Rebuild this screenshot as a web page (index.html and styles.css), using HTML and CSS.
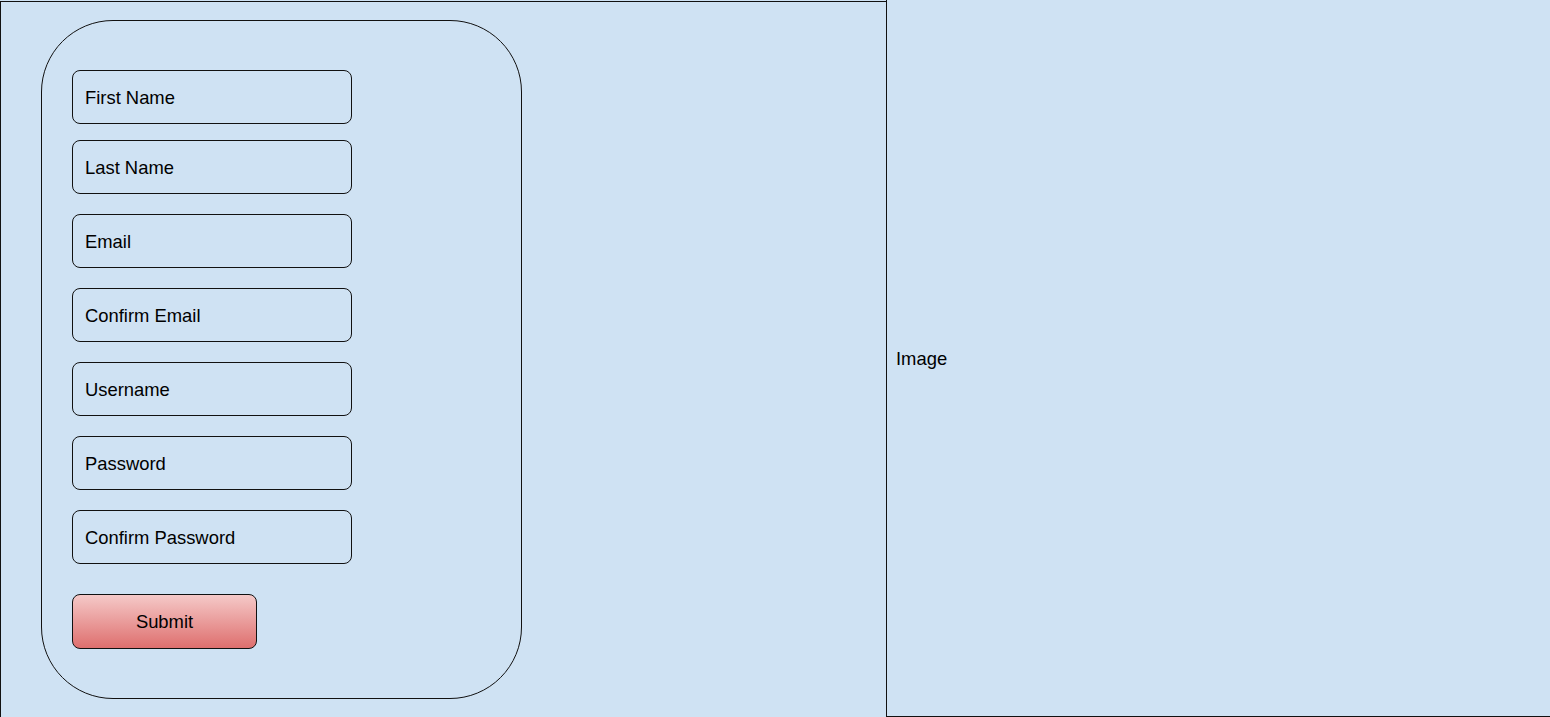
FILE: index.html
```html
<!DOCTYPE html>
<html lang="en">
<head>
  <meta charset="UTF-8">
  <title>Sign Up</title>
  <link rel="stylesheet" href="styles.css">
</head>
<body>

  <div class="page">
    <div class="form-side">
      <form class="card">
        <div class="field first">First Name</div>
        <div class="field">Last Name</div>
        <div class="field">Email</div>
        <div class="field">Confirm Email</div>
        <div class="field">Username</div>
        <div class="field">Password</div>
        <div class="field">Confirm Password</div>
        <button type="button" class="submit-btn">Submit</button>
      </form>
    </div>
    <div class="image-side">Image</div>
  </div>

</body>
</html>
```

FILE: styles.css
```css
body { margin: 0; background-color: #cfe2f3; font-family: "Liberation Sans", Arial, sans-serif; color: #000; overflow: hidden; }
.page { display: flex; height: 717px; overflow: hidden; }
.form-side { width: 885px; height: 730px; margin-top: 1px; border: 1px solid #111; flex-shrink: 0; }
.card { box-sizing: border-box; width: 481px; height: 679px; margin: 18px 0 0 40px; padding: 49px 0 0 30px; border: 1px solid #111; border-radius: 72px; display: flex; flex-direction: column; align-items: flex-start; }
.field { box-sizing: border-box; width: 280px; height: 54px; margin-top: 20px; padding: 2px 0 0 12px; border: 1px solid #111; border-radius: 8px; display: flex; align-items: center; font-size: 18.4px; }
.field.first { margin-top: 0; }
.field:nth-child(2) { margin-top: 16px; }
.submit-btn { box-sizing: border-box; width: 185px; height: 55px; margin-top: 30px; padding-top: 2px; border: 1px solid #111; border-radius: 8px; background: linear-gradient(#f5c9c8, #de6f6e); font-family: inherit; font-size: 18.4px; color: #000; cursor: pointer; }
.image-side { flex: 1; box-sizing: border-box; height: 717px; margin-left: -1px; border-left: 1px solid #111; border-bottom: 1px solid #111; display: flex; align-items: center; padding: 2px 0 0 9px; font-size: 18.4px; }
```
